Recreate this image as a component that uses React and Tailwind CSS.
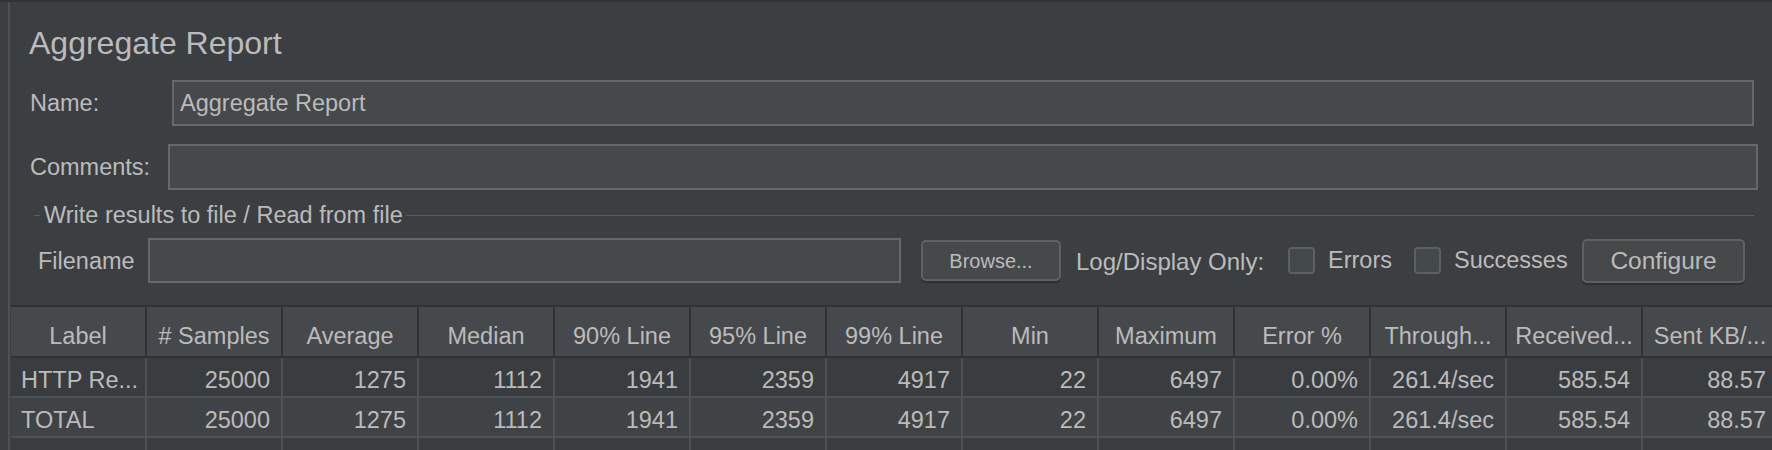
import React from 'react'

const HEADERS = [
  'Label',
  '# Samples',
  'Average',
  'Median',
  '90% Line',
  '95% Line',
  '99% Line',
  'Min',
  'Maximum',
  'Error %',
  'Through...',
  'Received...',
  'Sent KB/...',
]

const ROWS = [
  ['HTTP Re...', '25000', '1275', '1112', '1941', '2359', '4917', '22', '6497', '0.00%', '261.4/sec', '585.54', '88.57'],
  ['TOTAL', '25000', '1275', '1112', '1941', '2359', '4917', '22', '6497', '0.00%', '261.4/sec', '585.54', '88.57'],
  ['', '', '', '', '', '', '', '', '', '', '', '', ''],
]

const ROW_BG = ['bg-[#3a3d3f]', 'bg-[#404345]', 'bg-[#3a3d3f]']

function Checkbox() {
  return (
    <div className="w-[27px] h-[27px] shrink-0 rounded-[4px] border-2 border-[#5d6062] bg-[#43484a]" />
  )
}

function ResultsTable() {
  return (
    <div className="mt-[22px] ml-[1px] w-max border-t-2 border-[#2f3133]">
      <div className="grid grid-cols-[repeat(13,136px)] bg-[#46494b]">
        {HEADERS.map((h) => (
          <div
            key={h}
            className="h-[51px] border-r-2 border-b-2 border-[#2f3133] flex items-center justify-center pt-[10px] whitespace-nowrap"
          >
            {h}
          </div>
        ))}
      </div>
      {ROWS.map((row, i) => (
        <div key={i} className={`grid grid-cols-[repeat(13,136px)] ${ROW_BG[i]}`}>
          {row.map((cell, j) => (
            <div
              key={j}
              className={
                j === 0
                  ? 'h-[40px] border-r-2 border-b-2 border-[#4f5254] flex items-center pl-[10px] pt-[8px] whitespace-nowrap'
                  : 'h-[40px] border-r-2 border-b-2 border-[#4f5254] flex items-center justify-end pr-[11px] pt-[8px] whitespace-nowrap'
              }
            >
              {cell}
            </div>
          ))}
        </div>
      ))}
    </div>
  )
}

export default function App() {
  return (
    <div className="w-[1772px] h-[450px] overflow-hidden bg-[#3c3f41] font-['Liberation_Sans',Arial,sans-serif] text-[#bbbbbb] text-[23.5px]">
      <div className="h-[2px] bg-[#313335]" />
      <div className="flex h-[448px]">
        <div className="w-[8px] shrink-0" />
        <div className="w-[2px] shrink-0 bg-[#4e5153]" />
        <div className="flex-1 min-w-0 flex flex-col">
          <div className="mt-[23px] h-[37px] leading-[37px] pl-[19px] text-[32px] whitespace-nowrap">
            Aggregate Report
          </div>

          <div className="mt-[18px] flex items-center h-[46px]">
            <div className="pl-[20px] pt-[2px] w-[162px] shrink-0">Name:</div>
            <div className="w-[1582px] h-[46px] border-2 border-[#666869] bg-[#45494a] flex items-center pl-[6px] pt-[2px]">
              Aggregate Report
            </div>
          </div>

          <div className="mt-[18px] flex items-center h-[46px]">
            <div className="pl-[20px] pt-[2px] w-[158px] shrink-0">Comments:</div>
            <div className="w-[1590px] h-[46px] border-2 border-[#666869] bg-[#45494a]" />
          </div>

          <div className="mt-[10px] h-[30px] flex items-center ml-[24px] mr-[18px]">
            <div className="w-[6px] h-px bg-[#5a5c5e]" />
            <div className="ml-[4px] pt-[2px] whitespace-nowrap">Write results to file / Read from file</div>
            <div className="ml-[3px] flex-1 h-px bg-[#5a5c5e]" />
          </div>

          <div className="mt-[8px] h-[46px] flex items-center">
            <div className="pl-[28px] pt-[2px] w-[138px] shrink-0">Filename</div>
            <div className="w-[753px] h-[45px] shrink-0 border-2 border-[#666869] bg-[#45494a]" />
            <div className="ml-[20px] w-[140px] h-[41px] shrink-0 rounded-[5px] border-2 border-[#5e6162] bg-[#45494a] shadow-[0_2px_1px_rgba(0,0,0,0.25)] flex items-center justify-center pt-[1px] text-[20px]">
              Browse...
            </div>
            <div className="ml-[15px] w-[212px] pt-[2px] shrink-0 text-[24px] whitespace-nowrap">Log/Display Only:</div>
            <Checkbox />
            <div className="ml-[13px] w-[86px] pt-[1px] shrink-0">Errors</div>
            <Checkbox />
            <div className="ml-[13px] w-[128px] pt-[1px] shrink-0">Successes</div>
            <div className="w-[163px] h-[44px] shrink-0 rounded-[5px] border-2 border-[#5e6162] bg-[#45494a] shadow-[0_2px_1px_rgba(0,0,0,0.25)] flex items-center justify-center pt-[2px] text-[24.5px]">
              Configure
            </div>
          </div>

          <ResultsTable />
        </div>
      </div>
    </div>
  )
}
